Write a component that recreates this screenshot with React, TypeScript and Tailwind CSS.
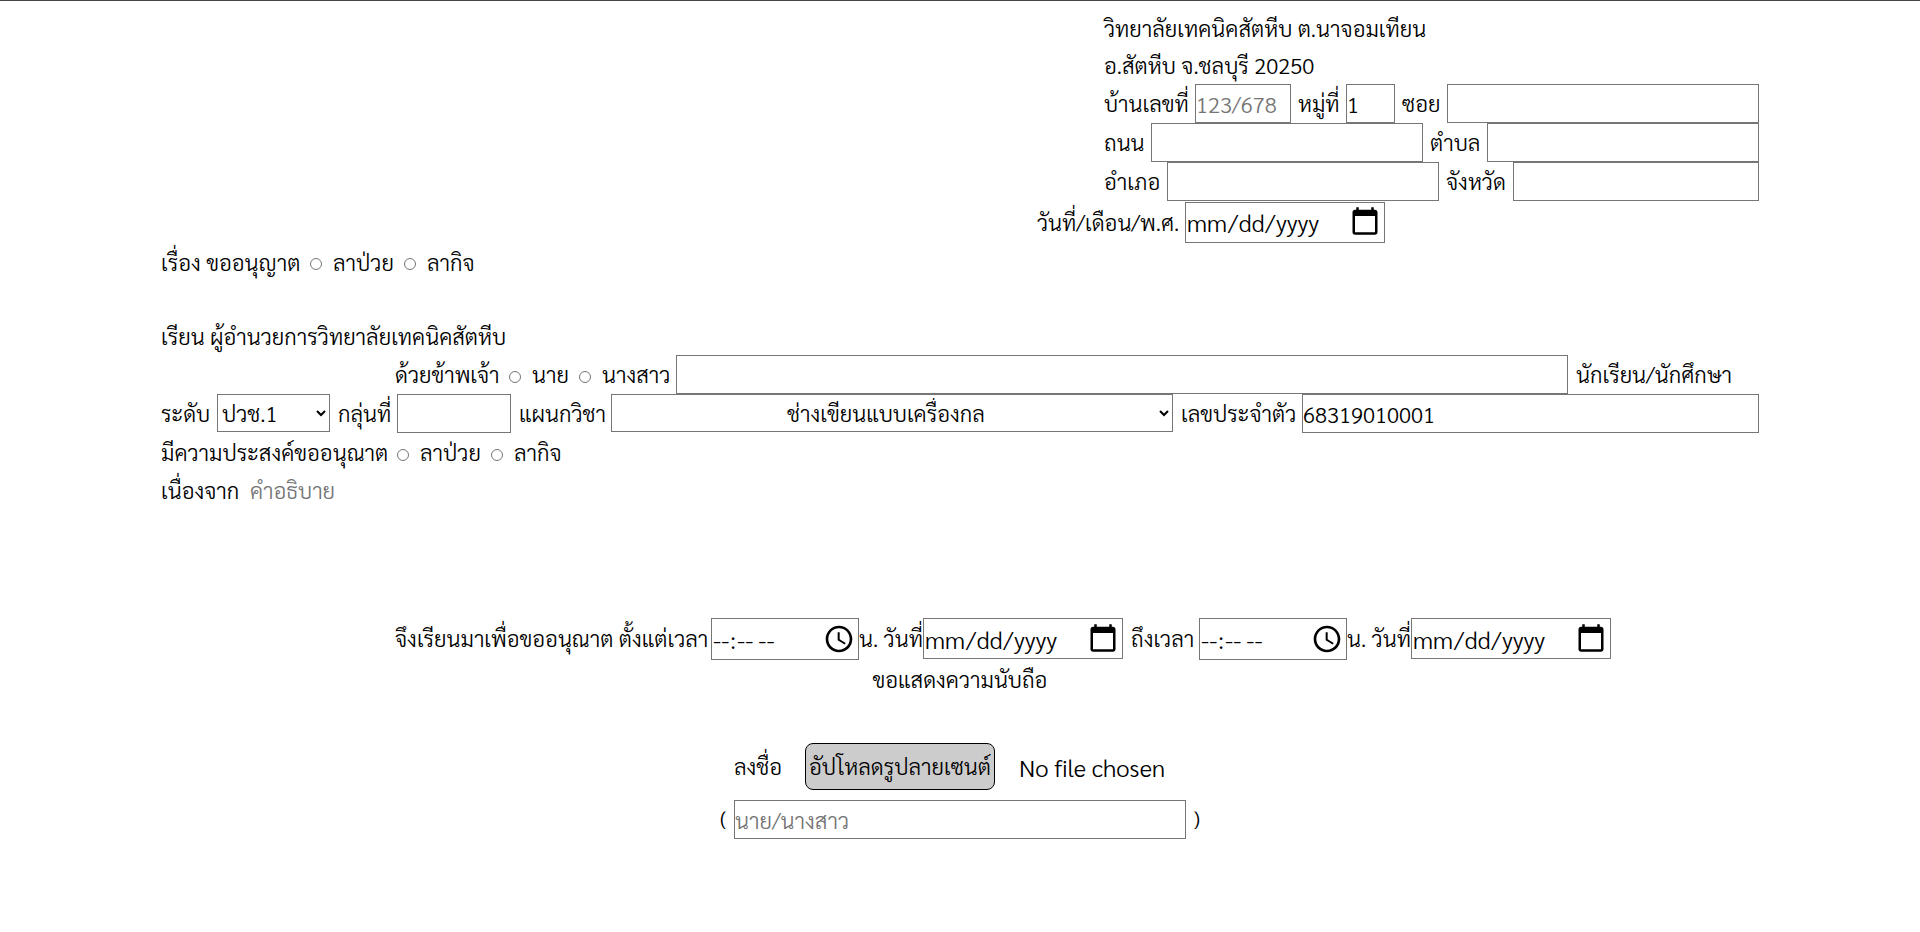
import React from 'react';

const box =
  'min-w-0 shrink-0 rounded-none border border-[#767676] bg-white text-black placeholder:text-[#757575]';
const field = box + ' h-[39px]';
const picker =
  box +
  ' pr-[3px] text-2xl [&::-webkit-calendar-picker-indicator]:m-0 [&::-webkit-calendar-picker-indicator]:size-8 [&::-webkit-calendar-picker-indicator]:p-0';
const datePicker = picker + ' h-[41px] w-[200px]';
const timePicker = picker + ' h-[42px] w-[148px]';
const select = 'h-[38px] self-start border border-[#767676] bg-white';
const radio =
  'mt-1 mr-[11px] ml-3 size-3 shrink-0 appearance-none rounded-full border border-[#767676] checked:border-4 checked:border-[#0075ff]';
const row = 'flex h-[39px] items-center';

interface FieldProps extends React.InputHTMLAttributes<HTMLInputElement> {
  label: string;
  name: string;
  labelClass: string;
}

function Field({ label, name, labelClass, ...rest }: FieldProps) {
  return (
    <>
      <label htmlFor={name} className={labelClass + ' shrink-0'}>
        {label}
      </label>
      <input id={name} name={name} {...rest} />
    </>
  );
}

function Choice({ name, value, className = '' }: { name: string; value: string; className?: string }) {
  return (
    <label className={className + ' flex shrink-0 items-center'}>
      <input type="radio" name={name} value={value} className={radio} />
      {value}
    </label>
  );
}

export default function App() {
  return (
    <form className="min-h-screen border-t border-[#444] bg-white px-[161px] pt-[9px] font-['TH_Sarabun_New','Sarabun_Light','Sarabun','Lato','Noto_Sans_Thai',sans-serif] text-[22px] leading-[37px] font-light whitespace-nowrap text-black">
      <header className="flex flex-col items-end">
        <div className="w-[655px]">
          <p>วิทยาลัยเทคนิคสัตหีบ ต.นาจอมเทียน</p>
          <p>อ.สัตหีบ จ.ชลบุรี 20250</p>
          <div className={row}>
            <Field label="บ้านเลขที่" name="house" labelClass="w-[91px]" className={field + ' w-24'} placeholder="123/678" />
            <Field label="หมู่ที่" name="moo" labelClass="ml-[7px] w-12" className={field + ' w-[49px]'} defaultValue="1" />
            <Field label="ซอย" name="soi" labelClass="ml-[7px] w-[45px]" className={field + ' flex-1'} />
          </div>
          <div className={row}>
            <Field label="ถนน" name="road" labelClass="w-[47px]" className={field + ' w-[272px]'} />
            <Field label="ตำบล" name="tambon" labelClass="ml-[7px] w-[57px]" className={field + ' flex-1'} />
          </div>
          <div className={row}>
            <Field label="อำเภอ" name="amphoe" labelClass="w-[63px]" className={field + ' w-[272px]'} />
            <Field label="จังหวัด" name="province" labelClass="ml-[7px] w-[67px]" className={field + ' flex-1'} />
          </div>
        </div>
        <div className="flex h-[42px] w-[722px] items-center">
          <Field label="วันที่/เดือน/พ.ศ." name="date" labelClass="w-[148px]" className={datePicker} type="date" />
        </div>
      </header>

      <div className="flex h-[38px] items-center">
        <span className="w-[137px]">เรื่อง ขออนุญาต</span>
        <Choice name="subject" value="ลาป่วย" className="w-[94px]" />
        <Choice name="subject" value="ลากิจ" />
      </div>
      <p className="mt-[37px]">เรียน ผู้อำนวยการวิทยาลัยเทคนิคสัตหีบ</p>

      <div className={row + ' pl-[234px]'}>
        <span className="w-[102px]">ด้วยข้าพเจ้า</span>
        <Choice name="title" value="นาย" className="w-[70px]" />
        <Choice name="title" value="นางสาว" className="w-[109px]" />
        <input aria-label="ชื่อ-สกุล" name="student" className={field + ' flex-1'} />
        <span className="ml-2 w-[183px]">นักเรียน/นักศึกษา</span>
      </div>
      <div className={row}>
        <label htmlFor="level" className="w-14">ระดับ</label>
        <select id="level" className={select + ' w-[113px]'}>
          <option>ปวช.1</option>
        </select>
        <Field label="กลุ่นที่" name="group" labelClass="ml-2 w-[59px]" className={field + ' w-[114px]'} />
        <label htmlFor="dept" className="ml-2 w-[92px]">แผนกวิชา</label>
        <select id="dept" className={select + ' w-[562px] text-center'}>
          <option>ช่างเขียนแบบเครื่องกล</option>
        </select>
        <Field label="เลขประจำตัว" name="sid" labelClass="ml-2 w-[121px]" className={field + ' flex-1'} defaultValue="68319010001" />
      </div>
      <div className={row}>
        <span className="w-[224px]">มีความประสงค์ขออนุณาต</span>
        <Choice name="purpose" value="ลาป่วย" className="w-[94px]" />
        <Choice name="purpose" value="ลากิจ" />
      </div>
      <div className="flex">
        <label htmlFor="reason" className="w-[85px]">เนื่องจาก</label>
        <textarea id="reason" placeholder="คำอธิบาย" className="h-36 flex-1 resize-none px-1 placeholder:text-[#757575]" />
      </div>

      <div className="flex h-[45px] items-center pl-[234px]">
        <Field label="จึงเรียนมาเพื่อขออนุณาต ตั้งแต่เวลา" name="start-time" labelClass="w-[316px]" className={timePicker} type="time" />
        <Field label="น. วันที่" name="start-date" labelClass="w-16" className={datePicker} type="date" />
        <Field label="ถึงเวลา" name="end-time" labelClass="ml-2 w-[68px]" className={timePicker} type="time" />
        <Field label="น. วันที่" name="end-date" labelClass="w-16" className={datePicker} type="date" />
      </div>
      <p className="text-center">ขอแสดงความนับถือ</p>

      <div className="mx-auto mt-[45px] flex w-[480px] items-center gap-6 pl-[14px]">
        <span className="w-[47px]">ลงชื่อ</span>
        <label className="flex h-[47px] w-[190px] shrink-0 items-center justify-center rounded-lg border border-black bg-[#ccc]">
          <input type="file" className="sr-only" />
          อัปโหลดรูปลายเซนต์
        </label>
        <span className="text-2xl">No file chosen</span>
      </div>
      <div className="mx-auto mt-[10px] flex w-[480px] items-center">
        <span className="w-[14px]">(</span>
        <input aria-label="นาย/นางสาว" placeholder="นาย/นางสาว" className={field + ' flex-1'} />
        <span className="w-[14px] text-right">)</span>
      </div>
    </form>
  );
}
